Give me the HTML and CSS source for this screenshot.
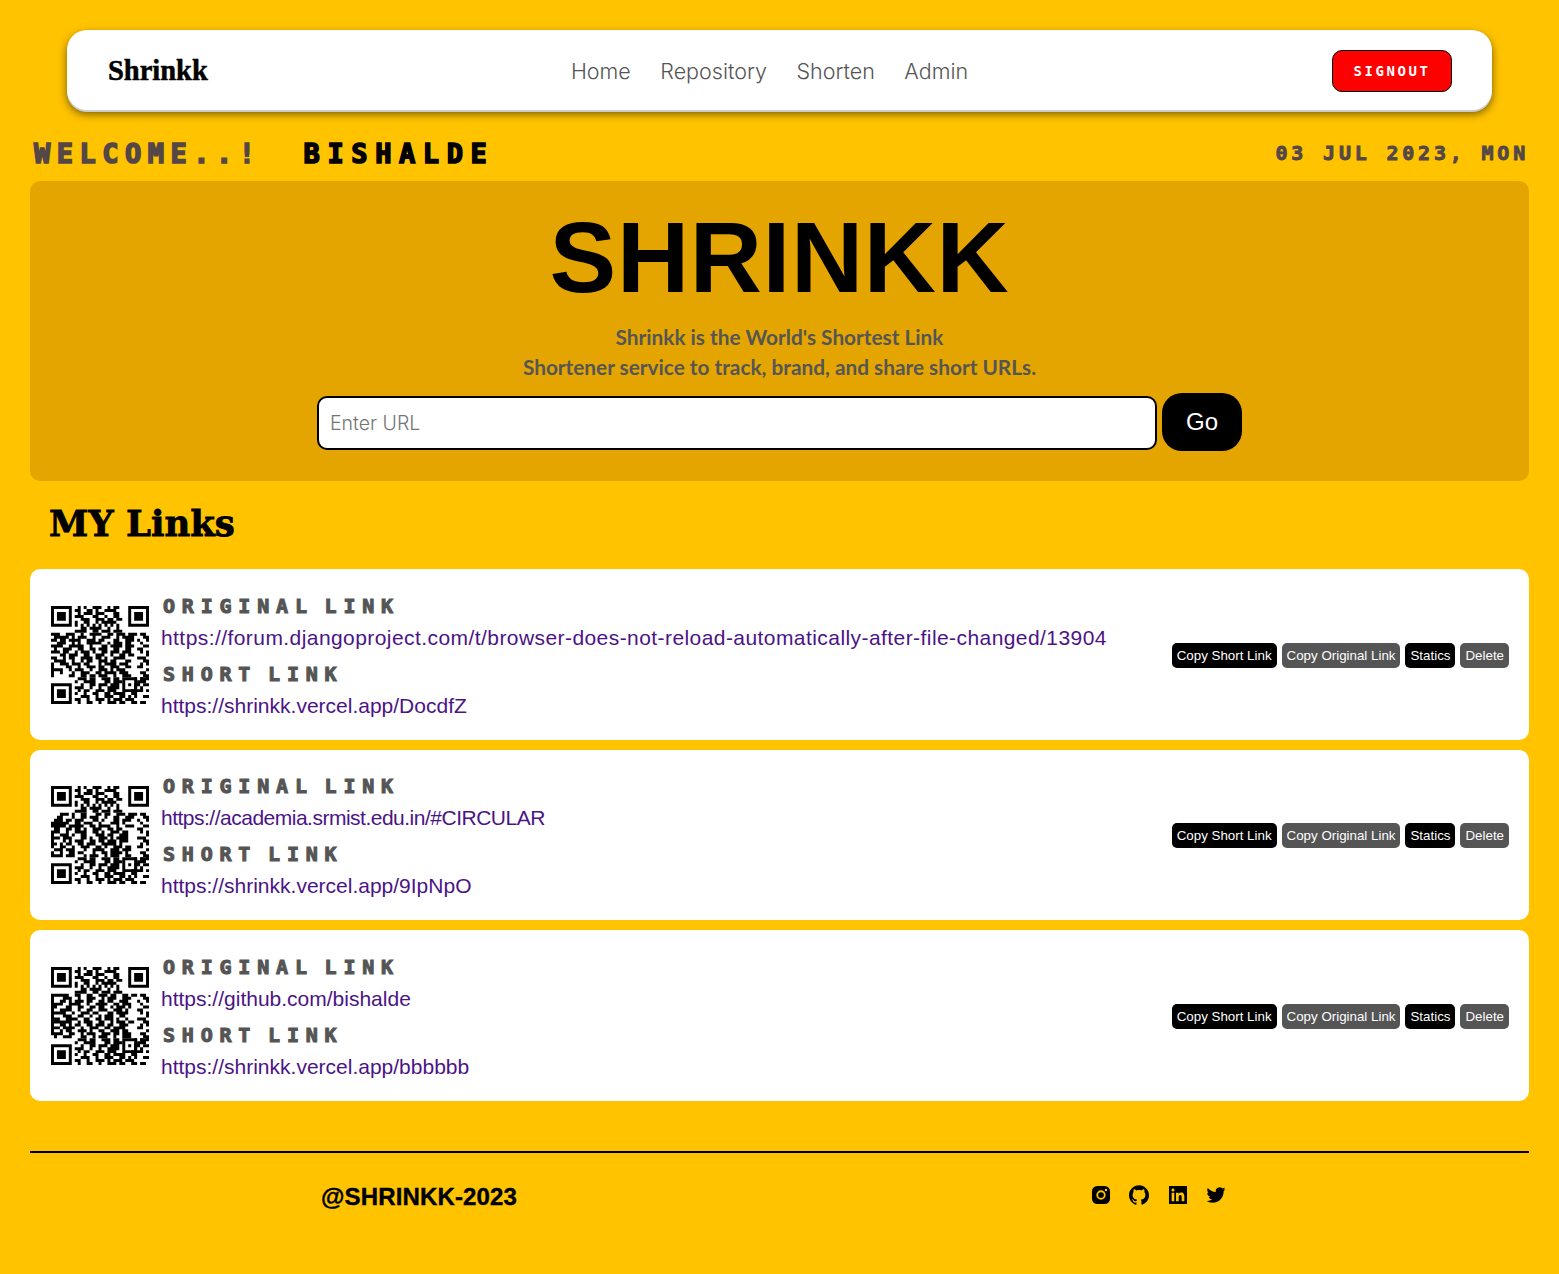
FILE: index.html
```html
<!DOCTYPE html>
<html lang="en">
<head>
<meta charset="utf-8">
<title>Shrinkk</title>
<link rel="stylesheet" href="styles.css">
</head>
<body>
<svg class="defs" width="0" height="0" aria-hidden="true">
  <symbol id="qr-base" viewBox="0 0 33 33">
    <path class="qr-fill" d="M0 0h7v7h-7zM1 1v5h5v-5zM2 2h3v3h-3zM26 0h7v7h-7zM27 1v5h5v-5zM28 2h3v3h-3zM0 26h7v7h-7zM1 27v5h5v-5zM2 28h3v3h-3zM24 24h5v5h-5zM25 25v3h3v-3zM26 26h1v1h-1z"/>
    <path class="qr-run" d="M9 .5h1m1 0h1m2 0h3m2 0h1m1 0h2M8 1.5h2m2 0h2m1 0h1m2 0h4M9 2.5h1m1 0h3m1 0h3m3 0h2M8 3.5h3m3 0h2m2 0h1m2 0h2M10 4.5h3m2 0h3m1 0h2m1 0h2M8 5.5h1m2 0h2m2 0h1m1 0h5M8 6.5h1m1 0h1m1 0h1m1 0h1m1 0h1m1 0h1m1 0h1m1 0h1M10 7.5h2m1 0h4m2 0h1m2 0h1M8 8.5h4m2 0h2m1 0h3m1 0h3M9 24.5h3m1 0h2m2 0h3m1 0h2m5 0h1m1 0h2M8 25.5h1m2 0h4m3 0h2m1 0h3m5 0h3M10 26.5h1m2 0h2m1 0h3m1 0h3m5 0h2M8 27.5h3m2 0h1m2 0h1m2 0h4m5 0h1m1 0h1M9 28.5h1m1 0h2m2 0h3m1 0h3m5 0h4M8 29.5h1m2 0h1m2 0h2m2 0h2m1 0h4m2 0h2M10 30.5h3m2 0h1m2 0h3m2 0h2m1 0h1m1 0h1M8 31.5h2m2 0h1m2 0h3m1 0h1m1 0h3m1 0h3M9 32.5h1m2 0h2m2 0h1m2 0h3m1 0h2m2 0h2"/>
    <path class="qr-run" d="M30 9.5h2M31 10.5h2M29 11.5h1m2 0h1M30 12.5h1M31 13.5h2M29 14.5h2M30 15.5h1m1 0h1M32 16.5h1M29 17.5h3M31 18.5h2M30 19.5h1m1 0h1M29 20.5h2M32 21.5h1M30 22.5h2M31 23.5h2M30 24.5h1m1 0h1M31 26.5h2M30 28.5h1m1 0h1M31 30.5h2M30 32.5h2"/>
  </symbol>
</svg>

<nav class="navbar">
  <a class="brand" href="#">Shrinkk</a>
  <ul class="nav-links">
    <li><a href="#">Home</a></li>
    <li><a href="#">Repository</a></li>
    <li><a href="#">Shorten</a></li>
    <li><a href="#">Admin</a></li>
  </ul>
  <button class="signout" type="button">SIGNOUT</button>
</nav>

<div class="welcome">
  <div class="welcome-left">
    <span class="welcome-label">WELCOME..!</span>
    <span class="welcome-user">BISHALDE</span>
  </div>
  <span class="welcome-date">03 JUL 2023, MON</span>
</div>

<section class="hero">
  <h1 class="hero-title">SHRINKK</h1>
  <p class="hero-sub">Shrinkk is the World's Shortest Link<br>Shortener service to track, brand, and share short URLs.</p>
  <form class="hero-form">
    <input class="url-input" type="text" placeholder="Enter URL">
    <button class="go" type="button">Go</button>
  </form>
</section>

<h2 class="section-title">MY Links</h2>

<main class="cards">
  <article class="card">
    <svg class="qr" viewBox="0 0 33 33" role="img" aria-label="QR code">
      <use href="#qr-base"/>
      <path class="qr-run" d="M0 9.5h3m2 0h3m2 0h1m2 0h4m2 0h2m1 0h3m1 0h3M1 10.5h5m1 0h1m1 0h3m2 0h1m2 0h3m2 0h1m1 0h4M0 11.5h2m1 0h2m1 0h4m2 0h3m1 0h2m3 0h2m2 0h3M2 12.5h3m2 0h1m1 0h1m2 0h5m2 0h1m1 0h3m1 0h2M0 13.5h4m2 0h5m2 0h1m3 0h2m1 0h4m1 0h3M1 14.5h1m2 0h3m2 0h2m2 0h2m1 0h3m2 0h2m2 0h2M0 15.5h3m1 0h2m2 0h1m1 0h3m1 0h1m2 0h2m1 0h3m1 0h3M3 16.5h2m1 0h3m2 0h2m2 0h3m2 0h1m2 0h2m1 0h2M0 17.5h2m2 0h1m1 0h2m2 0h4m1 0h2m1 0h1m2 0h4M1 18.5h4m2 0h1m2 0h1m1 0h2m2 0h3m1 0h2m3 0h2M0 19.5h1m2 0h3m1 0h3m1 0h2m3 0h1m1 0h4m1 0h3M0 20.5h1m4 0h2m2 0h1m2 0h3m1 0h2m2 0h3m2 0h2M0 21.5h4m2 0h1m1 0h3m2 0h1m2 0h3m1 0h1m1 0h3M0 22.5h1m2 0h1m3 0h1m2 0h3m2 0h2m1 0h4m1 0h3M0 23.5h1m5 0h2m2 0h2m1 0h2m1 0h3m2 0h1m2 0h3"/>
    </svg>
    <div class="card-body">
      <h3 class="link-label">ORIGINAL LINK</h3>
      <a class="link-url link-url-wide" href="#">https://forum.djangoproject.com/t/browser-does-not-reload-automatically-after-file-changed/13904</a>
      <h3 class="link-label">SHORT LINK</h3>
      <a class="link-url" href="#">https://shrinkk.vercel.app/DocdfZ</a>
    </div>
    <div class="actions">
      <button class="btn btn-black" type="button">Copy Short Link</button>
      <button class="btn btn-gray" type="button">Copy Original Link</button>
      <button class="btn btn-black" type="button">Statics</button>
      <button class="btn btn-gray" type="button">Delete</button>
    </div>
  </article>

  <article class="card">
    <svg class="qr" viewBox="0 0 33 33" role="img" aria-label="QR code">
      <use href="#qr-base"/>
      <path class="qr-run" d="M3 9.5h3m1 0h1m2 0h2m3 0h2m1 0h2m2 0h3m1 0h3M2 10.5h2m3 0h1m2 0h2m1 0h3m2 0h1m2 0h2m2 0h3M1 11.5h3m1 0h2m1 0h3m3 0h2m1 0h1m3 0h2m1 0h3M0 12.5h6m2 0h2m1 0h3m2 0h1m3 0h3m1 0h1M0 13.5h5m1 0h5m2 0h2m1 0h4m2 0h1m2 0h3M1 14.5h2m2 0h2m1 0h2m1 0h1m2 0h3m2 0h2m1 0h2M0 15.5h3m2 0h1m2 0h4m2 0h2m1 0h1m2 0h3m1 0h2M0 16.5h1m2 0h3m1 0h1m2 0h2m3 0h3m1 0h2m2 0h3M0 17.5h3m1 0h3m3 0h2m1 0h1m2 0h3m1 0h1m1 0h4M0 18.5h1m3 0h1m1 0h1m1 0h3m2 0h2m1 0h2m1 0h3m1 0h3M0 19.5h2m1 0h1m1 0h2m2 0h2m1 0h3m2 0h5m1 0h1M0 20.5h1m2 0h2m2 0h1m2 0h3m2 0h2m1 0h1m2 0h3m1 0h2M1 21.5h3m1 0h3m3 0h1m2 0h4m2 0h3m1 0h3M0 22.5h1m2 0h1m2 0h2m1 0h2m3 0h1m2 0h2m1 0h4m1 0h1M0 23.5h4m1 0h3m3 0h1m1 0h3m2 0h1m1 0h3m2 0h2"/>
    </svg>
    <div class="card-body">
      <h3 class="link-label">ORIGINAL LINK</h3>
      <a class="link-url link-url-tight" href="#">https://academia.srmist.edu.in/#CIRCULAR</a>
      <h3 class="link-label">SHORT LINK</h3>
      <a class="link-url" href="#">https://shrinkk.vercel.app/9IpNpO</a>
    </div>
    <div class="actions">
      <button class="btn btn-black" type="button">Copy Short Link</button>
      <button class="btn btn-gray" type="button">Copy Original Link</button>
      <button class="btn btn-black" type="button">Statics</button>
      <button class="btn btn-gray" type="button">Delete</button>
    </div>
  </article>

  <article class="card">
    <svg class="qr" viewBox="0 0 33 33" role="img" aria-label="QR code">
      <use href="#qr-base"/>
      <path class="qr-run" d="M0 9.5h6m2 0h2m2 0h2m2 0h3m1 0h2m2 0h2m1 0h2M0 10.5h1m3 0h3m2 0h1m2 0h3m2 0h1m1 0h3m2 0h3M0 11.5h1m2 0h2m1 0h1m1 0h3m1 0h2m2 0h2m1 0h2m2 0h3M0 12.5h4m2 0h4m2 0h1m2 0h4m2 0h2m1 0h3M0 13.5h2m3 0h2m2 0h2m2 0h2m1 0h2m2 0h1m1 0h3m1 0h1M0 14.5h1m2 0h4m2 0h1m2 0h2m2 0h3m2 0h3m1 0h1M0 15.5h5m2 0h1m2 0h3m1 0h2m3 0h2m1 0h4M0 16.5h1m3 0h3m2 0h2m2 0h1m2 0h1m1 0h3m2 0h2M0 17.5h3m2 0h4m2 0h2m2 0h2m1 0h3m1 0h1m2 0h1M0 18.5h7m2 0h1m1 0h3m2 0h2m2 0h1m1 0h3m1 0h2M0 19.5h1m2 0h2m1 0h1m1 0h2m2 0h2m1 0h3m1 0h2m2 0h3M0 20.5h3m1 0h4m2 0h1m2 0h3m2 0h2m1 0h4M0 21.5h1m2 0h1m1 0h2m2 0h3m1 0h1m2 0h2m2 0h3m1 0h2M0 22.5h4m2 0h2m2 0h1m1 0h3m2 0h3m1 0h2m1 0h3M1 23.5h1m2 0h3m3 0h2m2 0h1m1 0h3m2 0h1m2 0h3"/>
    </svg>
    <div class="card-body">
      <h3 class="link-label">ORIGINAL LINK</h3>
      <a class="link-url" href="#">https://github.com/bishalde</a>
      <h3 class="link-label">SHORT LINK</h3>
      <a class="link-url" href="#">https://shrinkk.vercel.app/bbbbbb</a>
    </div>
    <div class="actions">
      <button class="btn btn-black" type="button">Copy Short Link</button>
      <button class="btn btn-gray" type="button">Copy Original Link</button>
      <button class="btn btn-black" type="button">Statics</button>
      <button class="btn btn-gray" type="button">Delete</button>
    </div>
  </article>
</main>

<footer class="footer">
  <p class="copyright">@SHRINKK-2023</p>
  <div class="socials">
    <a href="#" aria-label="Instagram"><svg class="social" viewBox="-1.3 -1.3 26.6 26.6"><path fill-rule="evenodd" d="M7 0h10a7 7 0 0 1 7 7v10a7 7 0 0 1-7 7H7a7 7 0 0 1-7-7V7a7 7 0 0 1 7-7zm5 5.8a6.2 6.2 0 1 0 0 12.4 6.2 6.2 0 0 0 0-12.4zm0 2.4a3.8 3.8 0 1 1 0 7.6 3.8 3.8 0 0 1 0-7.6zM18.6 3.8a1.6 1.6 0 1 0 0 3.2 1.6 1.6 0 0 0 0-3.2z"/></svg></a>
    <a href="#" aria-label="GitHub"><svg class="social" viewBox="0 0 24 24"><path d="M12 .297c-6.63 0-12 5.373-12 12 0 5.303 3.438 9.8 8.205 11.385.6.113.82-.258.82-.577 0-.285-.01-1.04-.015-2.04-3.338.724-4.042-1.61-4.042-1.61C4.422 18.07 3.633 17.7 3.633 17.7c-1.087-.744.084-.729.084-.729 1.205.084 1.838 1.236 1.838 1.236 1.07 1.835 2.809 1.305 3.495.998.108-.776.417-1.305.76-1.605-2.665-.3-5.466-1.332-5.466-5.93 0-1.31.465-2.38 1.235-3.22-.135-.303-.54-1.523.105-3.176 0 0 1.005-.322 3.3 1.23.96-.267 1.98-.399 3-.405 1.02.006 2.04.138 3 .405 2.28-1.552 3.285-1.23 3.285-1.23.645 1.653.24 2.873.12 3.176.765.84 1.23 1.91 1.23 3.22 0 4.61-2.805 5.625-5.475 5.92.42.36.81 1.096.81 2.22 0 1.606-.015 2.896-.015 3.286 0 .315.21.69.825.57C20.565 22.092 24 17.592 24 12.297c0-6.627-5.373-12-12-12"/></svg></a>
    <a href="#" aria-label="LinkedIn"><svg class="social" viewBox="-1.3 -1.3 26.6 26.6"><path fill-rule="evenodd" d="M20.447 20.452h-3.554v-5.569c0-1.328-.027-3.037-1.852-3.037-1.853 0-2.136 1.445-2.136 2.939v5.667H9.351V9h3.414v1.561h.046c.477-.9 1.637-1.85 3.37-1.85 3.601 0 4.267 2.37 4.267 5.455v6.286zM5.337 7.433c-1.144 0-2.063-.926-2.063-2.065 0-1.138.92-2.063 2.063-2.063 1.14 0 2.064.925 2.064 2.063 0 1.139-.925 2.065-2.064 2.065zm1.782 13.019H3.555V9h3.564v11.452zM24 0H0v24h24z"/></svg></a>
    <a href="#" aria-label="Twitter"><svg class="social" viewBox="-.6 -.6 25.2 25.2"><path d="M23.953 4.57a10 10 0 01-2.825.775 4.958 4.958 0 002.163-2.723c-.951.555-2.005.959-3.127 1.184a4.92 4.92 0 00-8.384 4.482C7.69 8.095 4.067 6.13 1.64 3.162a4.822 4.822 0 00-.666 2.475c0 1.71.87 3.213 2.188 4.096a4.904 4.904 0 01-2.228-.616v.06a4.923 4.923 0 003.946 4.827 4.996 4.996 0 01-2.212.085 4.936 4.936 0 004.604 3.417 9.867 9.867 0 01-6.102 2.105c-.39 0-.779-.023-1.17-.067a13.995 13.995 0 007.557 2.209c9.053 0 13.998-7.496 13.998-13.985 0-.21 0-.42-.015-.63A9.935 9.935 0 0024 4.59z"/></svg></a>
  </div>
</footer>
</body>
</html>
```

FILE: styles.css
```css
* { box-sizing: border-box; }
html, body { margin: 0; }
body {
  background: #ffc300;
  font-family: "Liberation Sans", Arial, sans-serif;
  padding: 30px 30px 0;
  height: 1274px;
  overflow: hidden;
}
.defs { position: absolute; }
a { text-decoration: none; color: inherit; }

.navbar {
  width: 1425px;
  height: 80px;
  margin-left: 37px;
  padding: 2px 40px 0 41px;
  background: #fff;
  border-radius: 20px;
  display: grid;
  grid-template-columns: 1fr auto 1fr;
  align-items: center;
  box-shadow: 0 2px 0 #ccc, 0 4px 8px rgba(0, 0, 0, .55);
}
.brand {
  font-family: "Liberation Serif", serif;
  font-weight: 700;
  font-size: 28.5px;
  color: #000;
  -webkit-text-stroke: .5px #000;
}
.nav-links {
  list-style: none;
  display: flex;
  gap: 29.5px;
  margin: 0 21px 0 0;
  padding: 0;
  font-family: Inter, sans-serif;
  font-weight: 300;
  font-size: 21.5px;
  color: #555;
}
.signout {
  justify-self: end;
  width: 120px;
  height: 42px;
  border: 1px solid #000;
  border-radius: 10px;
  background: #f00;
  color: #fff;
  font-family: "DejaVu Sans Mono", monospace;
  font-weight: 700;
  font-size: 14px;
  letter-spacing: 2.6px;
}

.welcome {
  display: flex;
  justify-content: space-between;
  align-items: center;
  height: 71px;
  padding-top: 15px;
  font-family: "DejaVu Sans Mono", monospace;
  font-weight: 700;
}
.welcome-left { display: flex; gap: 42px; padding-left: 4px; }
.welcome-label, .welcome-user {
  font-size: 27px;
  -webkit-text-stroke: 1.6px currentColor;
}
.welcome-label { color: #554747; letter-spacing: 6.5px; }
.welcome-user { color: #000; letter-spacing: 7.6px; }
.welcome-date {
  color: #554747;
  font-size: 20px;
  letter-spacing: 3.8px;
  -webkit-text-stroke: .9px currentColor;
}

.hero {
  height: 300px;
  background: #e5a500;
  border-radius: 10px;
  display: flex;
  flex-direction: column;
  align-items: center;
}
.hero-title {
  margin: 19px 0 0;
  font-size: 100px;
  line-height: 115px;
  font-weight: 700;
  letter-spacing: .6px;
  color: #000;
}
.hero-sub {
  margin: 7px 0 0;
  text-align: center;
  font-family: Lato, sans-serif;
  font-weight: 700;
  font-size: 20.8px;
  line-height: 30px;
  color: #555;
}
.hero-form { display: flex; align-items: flex-start; gap: 5px; margin-top: 11px; }
.url-input {
  width: 840px;
  height: 54px;
  margin-top: 3px;
  padding: 0 11px;
  border: 2px solid #000;
  border-radius: 10px;
  background: #fff;
  font-family: Inter, sans-serif;
  font-size: 19.5px;
  outline: none;
}
.url-input::placeholder { color: #757575; font-weight: 300; }
.go {
  width: 80px;
  height: 58px;
  border: 0;
  border-radius: 20px;
  background: #000;
  color: #fff;
  font-family: "Liberation Sans", sans-serif;
  font-size: 24px;
}

.section-title {
  margin: 0;
  height: 88px;
  padding: 19px 0 0 19px;
  font-family: "DejaVu Serif", serif;
  font-weight: 700;
  font-size: 35.5px;
  line-height: 48px;
  color: #000;
  -webkit-text-stroke: .8px #000;
}

.cards { display: flex; flex-direction: column; gap: 10px; }
.card {
  height: 171px;
  background: #fff;
  border-radius: 10px;
  display: flex;
  align-items: center;
  padding: 0 20px 0 21px;
}
.card:nth-child(2) { height: 170px; }
.qr { width: 98px; height: 98px; flex: none; }
.qr-fill { fill: #000; fill-rule: evenodd; }
.qr-run { fill: none; stroke: #000; stroke-width: 1; }
.card-body {
  flex: 1;
  min-width: 0;
  padding-left: 12px;
  display: flex;
  flex-direction: column;
  align-items: flex-start;
}
.link-label {
  margin: 0 0 0 2px;
  height: 34px;
  font-family: "DejaVu Sans Mono", monospace;
  font-weight: 700;
  font-size: 20px;
  line-height: 38px;
  letter-spacing: 6.8px;
  word-spacing: -8px;
  color: #555;
  -webkit-text-stroke: 1.1px #555;
}
.link-url {
  height: 34px;
  font-family: "Liberation Sans", sans-serif;
  font-size: 21px;
  line-height: 34px;
  color: #4b1486;
}
.link-url-wide { letter-spacing: .43px; }
.link-url-tight { letter-spacing: -.5px; }
.actions { display: flex; gap: 5px; flex: none; margin-top: 1px; }
.btn {
  height: 25px;
  padding: 0 5px;
  border: 0;
  border-radius: 5px;
  color: #fff;
  font-family: "Liberation Sans", Arial, sans-serif;
  font-size: 13.33px;
}
.btn-black { background: #000; }
.btn-gray { background: #555; }

.footer {
  margin-top: 50px;
  border-top: 2px solid #000;
  display: flex;
  align-items: center;
  height: 90px;
  padding-left: 291px;
}
.copyright {
  margin: 0;
  width: 770px;
  font-weight: 700;
  font-size: 24px;
  letter-spacing: .15px;
  color: #000;
  -webkit-text-stroke: .4px #000;
}
.socials { display: flex; gap: 18.3px; margin-top: -4px; }
.socials a { display: block; height: 20px; }
.social { width: 20px; height: 20px; fill: #000; display: block; }
```
